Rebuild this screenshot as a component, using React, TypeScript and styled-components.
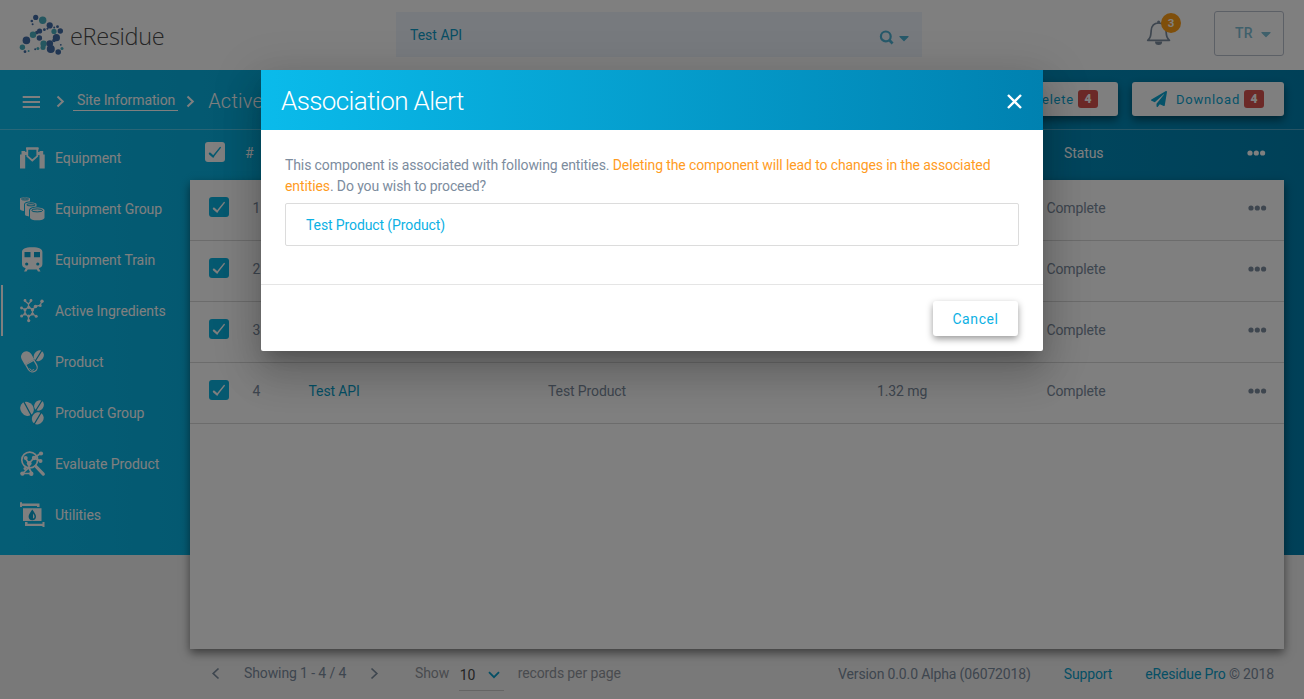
import React from "react";
import styled, { createGlobalStyle } from "styled-components";
import { FaPaperPlane, FaCaretDown } from "react-icons/fa";

const Global = createGlobalStyle`
  * { box-sizing: border-box; }
  body { margin: 0; overflow: hidden; background: #f2f2f2; font-family: Roboto, "Liberation Sans", sans-serif; font-size: 14px; letter-spacing: -0.11px; color: #7c8c9e; }
`;

const Page = styled.div`
  position: relative;
  width: 1304px;
  height: 699px;
  overflow: hidden;
  display: flex;
  flex-direction: column;
  background: linear-gradient(90deg, #0abbeb 0%, #0081b0 100%) 0 70px / 100% 485px no-repeat, #f2f2f2;
`;

const TopBar = styled.header`
  height: 70px;
  flex: none;
  background: #fff;
  display: flex;
  align-items: flex-start;
`;
const Brand = styled.div`
  width: 396px;
  height: 70px;
  padding: 13px 0 0 18px;
  display: flex;
`;
const BrandName = styled.span`
  font-family: "Open Sans", "Noto Sans", sans-serif;
  font-weight: 300;
  font-size: 23.5px;
  letter-spacing: -0.3px;
  line-height: 32px;
  margin: 7px 0 0 3px;
  color: #4a4a4a;
`;
const SearchBox = styled.div`
  width: 526px;
  height: 45px;
  margin-top: 12px;
  padding: 0 13px 0 14px;
  display: flex;
  align-items: center;
  background: #eef4fd;
  color: #0f9cc8;
`;
const SearchText = styled.span`
  flex: 1;
  letter-spacing: 0;
`;
const SearchTools = styled.span`
  display: flex;
  align-items: center;
  gap: 5px;
  padding-top: 6px;
  color: #4fb3d4;
`;
const Caret = styled(FaCaretDown)`
  width: 10px;
  height: 16px;
`;
const Bell = styled.div`
  position: relative;
  width: 40px;
  height: 40px;
  margin: 12px 0 0 223px;
  padding: 8px 0 0 1px;
`;
const BellCount = styled.span`
  position: absolute;
  left: 16px;
  top: 1px;
  width: 20px;
  height: 20px;
  border-radius: 50%;
  background: #ff9e16;
  color: #fff;
  font-size: 11.5px;
  font-weight: 700;
  line-height: 20px;
  text-align: center;
`;
const UserButton = styled.div`
  width: 70px;
  height: 45px;
  margin: 11px 0 0 29px;
  border: 1px solid #b9c0cd;
  border-radius: 3px;
  display: flex;
  align-items: center;
  justify-content: space-between;
  padding: 0 12px 1px 20px;
  color: #7fc0d6;
  font-weight: 500;
  letter-spacing: 0.1px;
  svg { margin-top: 2px; }
`;

const ActionBar = styled.div`
  height: 60px;
  flex: none;
  border-bottom: 1px solid rgba(255, 255, 255, 0.3);
  display: flex;
  align-items: center;
  padding: 3px 20px 0 22px;
  color: #fff;
`;
const MenuSlot = styled.span`
  width: 34px;
  display: flex;
  padding-top: 2px;
`;
const Crumb = styled.span`
  height: 20px;
  line-height: 19px;
  margin: 0 8px 0 8px;
  padding: 0 3px 0 4px;
  border-bottom: 1px solid #fff;
`;
const CrumbTitle = styled.span`
  margin-left: 13px;
  font-size: 20px;
  font-weight: 300;
  letter-spacing: 0.2px;
  flex: 1;
`;
const ActionButton = styled.div<{ $w: number }>`
  width: ${(p) => p.$w}px;
  height: 34px;
  margin: 0 0 4px 14px;
  border-radius: 3px;
  background: #fff;
  color: #0aa5d2;
  box-shadow: 0 4px 9px rgba(0, 0, 0, 0.45);
  display: flex;
  align-items: center;
  justify-content: flex-end;
  padding-right: 20px;
  font-size: 13px;
  font-weight: 450;
  letter-spacing: 0.78px;
`;
const Tag = styled.span`
  width: 20px;
  height: 18px;
  margin-left: 4px;
  border-radius: 3px;
  background: #d9534f;
  color: #fff;
  font-size: 12px;
  font-weight: 900;
  letter-spacing: 0;
  line-height: 18px;
  text-align: center;
`;
const Label = styled.span`
  margin-left: 9px;
`;

const Main = styled.div`
  display: flex;
  height: 519px;
  flex: none;
`;
const Sidebar = styled.nav`
  width: 190px;
  padding-top: 2px;
`;
const NavItem = styled.div<{ $active?: boolean }>`
  height: 51px;
  display: flex;
  align-items: center;
  padding-left: ${(p) => (p.$active ? 17 : 19)}px;
  margin-left: 1px;
  border-left: ${(p) => (p.$active ? "2px solid #fff" : "0")};
  color: #fff;
  letter-spacing: -0.06px;
  svg { margin-right: 9px; }
`;
const Content = styled.section`
  width: 1094px;
`;
const HeadRow = styled.div`
  height: 50px;
  display: flex;
  align-items: center;
  padding: 0 18px 6px 15px;
  color: #fff;
`;
const HeadHash = styled.span`
  margin-left: 20px;
  padding-top: 2px;
  flex: 1;
`;
const HeadStatus = styled.span`
  width: 183px;
  padding-top: 2px;
`;
const Panel = styled.div`
  height: 469px;
  background: #fff;
  box-shadow: 0 4px 9px rgba(0, 0, 0, 0.5);
`;
const Row = styled.div`
  height: 61px;
  border-bottom: 1px solid #d9d9d9;
  display: grid;
  grid-template-columns: 62.5px 56px 239.5px 329px 169.4px 1fr 36.5px;
  align-items: center;
  padding: 0 0 5px 0;
`;
const Cell = styled.span<{ $link?: boolean }>`
  color: ${(p) => (p.$link ? "#0a9fcb" : "inherit")};
`;
const Check = styled.span<{ $inverse?: boolean; $row?: boolean }>`
  width: 20px;
  height: 20px;
  margin: ${(p) => (p.$row ? "0 0 2px 19px" : "0")};
  border-radius: 3px;
  background: ${(p) => (p.$inverse ? "#fff" : "#0ab3e0")};
  color: ${(p) => (p.$inverse ? "#0ab3e0" : "#fff")};
  display: flex;
`;
const Dots = styled.svg`
  width: 19px;
  height: 6px;
  margin-top: 1px;
  fill: currentColor;
`;

const Footer = styled.footer`
  height: 50px;
  flex: none;
  display: flex;
  align-items: center;
  padding: 0 30px 1px 211px;
`;
const Showing = styled.span`
  width: 102px;
  margin: 0 24px;
  padding-bottom: 2px;
  white-space: nowrap;
`;
const Muted = styled.span<{ $first?: boolean }>`
  margin-left: ${(p) => (p.$first ? 36 : 0)}px;
  color: #92979e;
  padding-bottom: 2px;
`;
const Select = styled.span`
  width: 45px;
  height: 33px;
  margin: 9px 14px 0 9.6px;
  padding: 2px 4px 0 1px;
  border-bottom: 1px solid #cacaca;
  display: flex;
  align-items: center;
  justify-content: space-between;
  color: #4a4a4a;
  align-self: flex-start;
  letter-spacing: 0;
  svg { color: #0a9fcb; }
`;
const Legal = styled.span`
  margin-left: auto;
  display: flex;
  gap: 33px;
  letter-spacing: -0.14px;
`;
const Link = styled.span`
  color: #0a9fcb;
`;

const Backdrop = styled.div`
  position: absolute;
  inset: 0;
  background: rgba(0, 0, 0, 0.5);
  padding: 70px 0 0 261px;
`;
const Dialog = styled.div`
  width: 782px;
  height: 281px;
  border-radius: 0 0 2px 2px;
  background: #fff;
  box-shadow: 0 11px 15px -7px rgba(0, 0, 0, 0.2), 0 24px 38px 3px rgba(0, 0, 0, 0.14), 0 9px 46px 8px rgba(0, 0, 0, 0.12);
  display: flex;
  flex-direction: column;
`;
const DialogHead = styled.div`
  height: 60px;
  background: linear-gradient(90deg, #0abbeb, #0081b0);
  color: #fff;
  display: flex;
  align-items: center;
  justify-content: space-between;
  padding: 2px 21px 0 20px;
`;
const DialogTitle = styled.h2`
  margin: 0;
  font-size: 26px;
  font-weight: 300;
  letter-spacing: -0.6px;
`;
const DialogBody = styled.div`
  height: 155px;
  padding: 25px 24px 0;
  line-height: 21px;
  border-bottom: 1px solid #e5e5e5;
`;
const Warn = styled.span`
  color: #ff9c1f;
`;
const Entity = styled.div`
  height: 43px;
  margin-top: 6px;
  padding-left: 20px;
  border: 1px solid #dcdcdc;
  border-radius: 2px;
  line-height: 42px;
  color: #0cb1e4;
`;
const DialogFoot = styled.div`
  display: flex;
  justify-content: flex-end;
  padding: 16px 25px 0 0;
`;
const Cancel = styled.button`
  width: 85px;
  height: 35px;
  border: 0;
  border-radius: 3px;
  background: #fff;
  color: #0cb1e4;
  font: 450 14px Roboto, sans-serif;
  letter-spacing: 0.6px;
  box-shadow: 0 3px 7px rgba(0, 0, 0, 0.4);
`;

const NAVY = "#426ca6";
const TEAL = "#4aafc0";
const dots: [number, number, number, string][] = [
  [35.7, 17.4, 2.6, NAVY], [42.7, 20.3, 3.7, TEAL], [31.8, 21, 1.3, NAVY], [32.6, 24.2, 1, NAVY],
  [49.7, 25.4, 3.1, NAVY], [54.2, 27.4, 1, NAVY], [57.5, 26.7, 1.4, NAVY], [60.3, 31, 2.7, NAVY],
  [54, 31.4, 2.6, TEAL], [44.4, 29.7, 1.4, NAVY], [47.4, 28.8, 1, NAVY], [39.6, 31, 2.6, NAVY],
  [36.8, 32.6, 1.8, NAVY], [33, 34.7, 3.2, TEAL], [39.4, 38, 2.7, NAVY], [56.4, 37.7, 3.6, NAVY],
  [54, 40.4, 1.8, NAVY], [26.4, 40.4, 3.8, NAVY], [22.4, 47.2, 2.7, TEAL], [43.6, 43.8, 3.2, TEAL],
  [49.8, 43.6, 3.3, NAVY], [50.8, 49, 4, NAVY], [43, 47.5, 2.5, TEAL], [58.2, 52, 2.8, NAVY],
  [62, 48.4, 1.5, TEAL], [60.8, 44.8, 0.9, NAVY], [25, 51.7, 1.4, NAVY], [28.6, 51, 1, TEAL],
  [35.2, 49.3, 1, NAVY], [37.9, 48.4, 1.5, TEAL],
];
const Logo = () => (
  <svg width="49" height="44" viewBox="18 13 49 44">
    {dots.map(([x, y, r, c], i) => <circle key={i} cx={x} cy={y} r={r} fill={c} />)}
  </svg>
);

const Chevron = ({ d = "right", s = 2 }: { d?: "right" | "left" | "down"; s?: number }) => (
  <svg width={d === "down" ? 12 : 9} height={d === "down" ? 8 : 13} fill="none" stroke="currentColor" strokeWidth={s}>
    <path d={d === "right" ? "M1.5 1.5 6.8 6.5 1.5 11.5" : d === "left" ? "M7.5 1.5 2.2 6.5 7.5 11.5" : "M1 1.2 6 6.2 11 1.2"} />
  </svg>
);
const Menu = () => (
  <svg width="18" height="12" fill="currentColor">
    <path d="M.7 0H18v2H.7zM.7 5H18v2H.7zM.7 10H18v2H.7z" />
  </svg>
);
const Tick = () => (
  <svg width="20" height="20" fill="none" stroke="currentColor" strokeLinecap="round" strokeLinejoin="round">
    <path d="M4.9 11.6 8.1 14.5" strokeWidth="2.2" />
    <path d="M8.1 14.5 15.2 5.6" strokeWidth="1.5" />
  </svg>
);
const More = () => (
  <Dots viewBox="0 0 19 6">
    <circle cx="3" cy="3" r="2.6" /><circle cx="9.3" cy="3" r="2.6" /><circle cx="15.6" cy="3" r="2.6" />
  </Dots>
);
const Magnifier = () => (
  <svg width="15" height="15" fill="none" stroke="currentColor" strokeWidth="2.2">
    <circle cx="6.8" cy="6.4" r="4.9" /><path d="m10.2 10 3.4 3.5" strokeWidth="2.6" />
  </svg>
);
const BellIcon = () => (
  <svg width="26" height="27" viewBox="0 0 26 27" fill="none" stroke="#7c8c9e" strokeWidth="1.7">
    <path d="M1.7 20.3C4.7 18 4.8 15.5 5.2 10.5 5.6 5.8 8.3 3 12.6 3S19.6 5.8 20 10.5c.4 5 .5 7.5 3.5 9.8z" strokeLinejoin="round" />
    <circle cx="12.6" cy="2" r="1.5" fill="#7c8c9e" stroke="none" />
    <path d="M9 21.5h7.2a3.6 3.6 0 0 1-7.2 0z" fill="#7c8c9e" stroke="none" />
  </svg>
);

type IconName = "equipment" | "group" | "train" | "molecule" | "pill" | "pills" | "evaluate" | "utilities";
const glyphs: Record<IconName, React.ReactNode> = {
  equipment: (
    <>
      <path d="M0 9.5h1.5V6h3.7v17.5H0zM24.7 9.5h-1.5V6h-3.7v17.5h5.2z" />
      <path d="M5 7h2v3H5zM18 7h2v3h-2zM6 2.5h12.7v2H6z" />
      <path d="M7.3 3.5v7.7l5 4.3 5-4.3V3.5z" fill="none" stroke="currentColor" strokeWidth="1.8" />
    </>
  ),
  group: (
    <>
      <path d="M0 2.8C0 .8 10 .8 10 2.8v2.5C5.5 5.5 4 7 4 9v6C1.5 14.7 0 14 0 13z" />
      <path d="M5 8.3C5 6 16.5 6 16.5 8.3v2.2C11.5 11 9 12 9 14.5v6C6.5 20 5 19.5 5 18.5z" />
      <path d="M10 14.5c0-4 14.5-4 14.5 0v7.3c0 3.4-14.5 3.4-14.5 0z" />
      <g fill="none" stroke="#06a5d3" strokeWidth="1"><ellipse cx="5" cy="3" rx="3.5" ry="1" /><ellipse cx="11" cy="8.8" rx="4.2" ry="1.1" /><ellipse cx="17.2" cy="14.4" rx="5.5" ry="1.5" /></g>
    </>
  ),
  train: (
    <>
      <path d="M2 5c0-3 3-4.8 10.2-4.8S22.4 2 22.4 5v12c0 2-1.2 3.7-3.6 4.2l1.7 3.3H18l-1.2-2H7.7l-1.2 2H4l1.7-3.3C3.2 20.7 2 19 2 17z" />
      <g fill="#06a5d3"><path d="M4.5 5h6v5.3h-6zM14 5h6v5.3h-6z" /><circle cx="6.7" cy="17" r="1.6" /><circle cx="17.8" cy="17" r="1.6" /></g>
    </>
  ),
  molecule: (
    <>
      <path d="M5 11.5 8.5 9.3 12.5 11.5V16L8.5 18.3 5 16zM8.5 9.3V6L5 3M8.5 6 11 3M12.5 11.5 16 8l4-.5 2-4.2M12.5 16l3.5 2M5 16l-3.5 2M5 11.5 1.5 10M8.5 18.3v4" fill="none" stroke="currentColor" strokeWidth="1.3" />
      {[[5, 2.5, 1.4], [11, 2.5, 1.4], [1.5, 10, 1.4], [1.6, 18, 1.5], [16.2, 18.2, 1.5], [8.7, 22.6, 1.6], [15.5, 8.5, 1.8], [20.3, 7.7, 1.4], [22, 3.3, 1.7], [8.7, 9.3, 1.6], [12.5, 11.8, 1.7], [12.5, 16, 1.6], [5, 11.7, 1.5], [5, 16, 1.5], [8.7, 18, 1.5]].map(([x, y, r], i) => <circle key={i} cx={x} cy={y} r={r} />)}
    </>
  ),
  pill: (
    <>
      <g transform="rotate(-30 9.5 13)">
        <path d="M4 7a5.5 5.5 0 0 1 11 0v6H4z" />
        <path d="M4.8 13.5h9.4v5.5a4.7 4.7 0 0 1-9.4 0z" fill="none" stroke="currentColor" strokeWidth="1.3" />
      </g>
      <path d="m9.5 19.5 2.3 2 2.3-1" fill="none" stroke="currentColor" />
      <ellipse cx="18.8" cy="6.8" rx="4.8" ry="5.7" transform="rotate(35 18.8 6.8)" />
      <path d="m15.3 12 6.5-10.5" stroke="#06a5d3" strokeWidth="1.2" />
    </>
  ),
  pills: (
    <>
      <ellipse cx="7" cy="8.8" rx="6.5" ry="7.4" transform="rotate(-35 7 8.8)" />
      <path d="m4 2 7.5 14" stroke="#06a5d3" strokeWidth="1.3" />
      <ellipse cx="19" cy="5.5" rx="4.6" ry="5.4" transform="rotate(35 19 5.5)" />
      <path d="m15.8 10.5 6.2-10" stroke="#06a5d3" strokeWidth="1.2" />
      <ellipse cx="17.8" cy="18.3" rx="5.7" ry="6.3" transform="rotate(35 17.8 18.3)" />
      <path d="m14 24.5 7.5-12.5" stroke="#06a5d3" strokeWidth="1.3" />
    </>
  ),
  evaluate: (
    <>
      <g fill="none" stroke="currentColor"><circle cx="9.7" cy="9" r="7.9" strokeWidth="1.7" /><path d="m16 15.5 7.3 7.6" strokeWidth="3.2" strokeLinecap="round" /><path d="M5.5 7.5 9 12.5 14 7l6.5-4.5M9 12.5v4L2.5 22.5M9 17l2.5 5M14 7l6.5 3M2.5 22.5h9" strokeWidth="1.7" /></g>
      {[[21, 2.5, 2.1], [20.5, 10, 2], [5.7, 7, 2], [14, 7, 2.2], [9.2, 12.5, 2.4], [2.4, 22.6, 2.2], [11.3, 22.7, 2.2], [5, 17.5, 1.5]].map(([x, y, r], i) => <circle key={i} cx={x} cy={y} r={r} />)}
    </>
  ),
  utilities: (
    <>
      <path d="M0 .3h2v1.2h17.5V5H17V3.9H2V5H0zM3 6.3h18.5V19H3zM5 20h2.5v1.7h15V20h2v5h-2v-1H5z" />
      <path d="M12.3 7.5c2 3 3.7 5 3.7 7a3.7 3.7 0 0 1-7.4 0c0-2 1.7-4 3.7-7z" fill="#06a5d3" />
      <path d="M13 11.5c1 1.6 1.5 2.2 1.5 3.2A2 2 0 0 1 13 16.5z" />
    </>
  ),
};
const NavIcon = ({ name }: { name: IconName }) => (
  <svg width="26" height="26" viewBox="0 0 26 26" fill="currentColor">{glyphs[name]}</svg>
);

const nav: [IconName, string][] = [
  ["equipment", "Equipment"], ["group", "Equipment Group"], ["train", "Equipment Train"], ["molecule", "Active Ingredients"],
  ["pill", "Product"], ["pills", "Product Group"], ["evaluate", "Evaluate Product"], ["utilities", "Utilities"],
];
const rows = [
  { id: 1, name: "", product: "", dose: "" },
  { id: 2, name: "", product: "", dose: "" },
  { id: 3, name: "", product: "", dose: "" },
  { id: 4, name: "Test API", product: "Test Product", dose: "1.32 mg" },
];

export default function App() {
  return (
    <Page>
      <Global />
      <TopBar>
        <Brand><Logo /><BrandName>eResidue</BrandName></Brand>
        <SearchBox>
          <SearchText>Test API</SearchText>
          <SearchTools><Magnifier /><Caret /></SearchTools>
        </SearchBox>
        <Bell>
          <BellIcon />
          <BellCount>3</BellCount>
        </Bell>
        <UserButton>TR<Caret /></UserButton>
      </TopBar>
      <ActionBar>
        <MenuSlot><Menu /></MenuSlot>
        <Chevron />
        <Crumb>Site Information</Crumb>
        <Chevron />
        <CrumbTitle>Active Ingredients</CrumbTitle>
        <ActionButton $w={130}>Delete<Tag>4</Tag></ActionButton>
        <ActionButton $w={152}><FaPaperPlane size={16} /><Label>Download</Label><Tag>4</Tag></ActionButton>
      </ActionBar>
      <Main>
        <Sidebar>
          {nav.map(([icon, label]) => (
            <NavItem key={label} $active={icon === "molecule"}><NavIcon name={icon} />{label}</NavItem>
          ))}
        </Sidebar>
        <Content>
          <HeadRow>
            <Check $inverse><Tick /></Check>
            <HeadHash>#</HeadHash>
            <HeadStatus>Status</HeadStatus>
            <More />
          </HeadRow>
          <Panel>
            {rows.map((r) => (
              <Row key={r.id}>
                <Check $row><Tick /></Check>
                <Cell>{r.id}</Cell>
                <Cell $link>{r.name}</Cell>
                <Cell>{r.product}</Cell>
                <Cell>{r.dose}</Cell>
                <Cell>Complete</Cell>
                <More />
              </Row>
            ))}
          </Panel>
        </Content>
      </Main>
      <Footer>
        <Chevron d="left" s={1.7} />
        <Showing>Showing 1 - 4 / 4</Showing>
        <Chevron s={1.7} />
        <Muted $first>Show</Muted>
        <Select>10<Chevron d="down" s={1.8} /></Select>
        <Muted>records per page</Muted>
        <Legal>
          <span>Version 0.0.0 Alpha (06072018)</span>
          <Link>Support</Link>
          <span><Link>eResidue Pro</Link> © 2018</span>
        </Legal>
      </Footer>
      <Backdrop>
        <Dialog role="dialog">
          <DialogHead>
            <DialogTitle>Association Alert</DialogTitle>
            <svg width="15" height="15" stroke="#fff" strokeWidth="2.4"><path d="m1 1 13 13M14 1 1 14" /></svg>
          </DialogHead>
          <DialogBody>
            This component is associated with following entities. <Warn>Deleting the component will lead to changes in the associated entities</Warn>. Do you wish to proceed?
            <Entity>Test Product (Product)</Entity>
          </DialogBody>
          <DialogFoot><Cancel>Cancel</Cancel></DialogFoot>
        </Dialog>
      </Backdrop>
    </Page>
  );
}
